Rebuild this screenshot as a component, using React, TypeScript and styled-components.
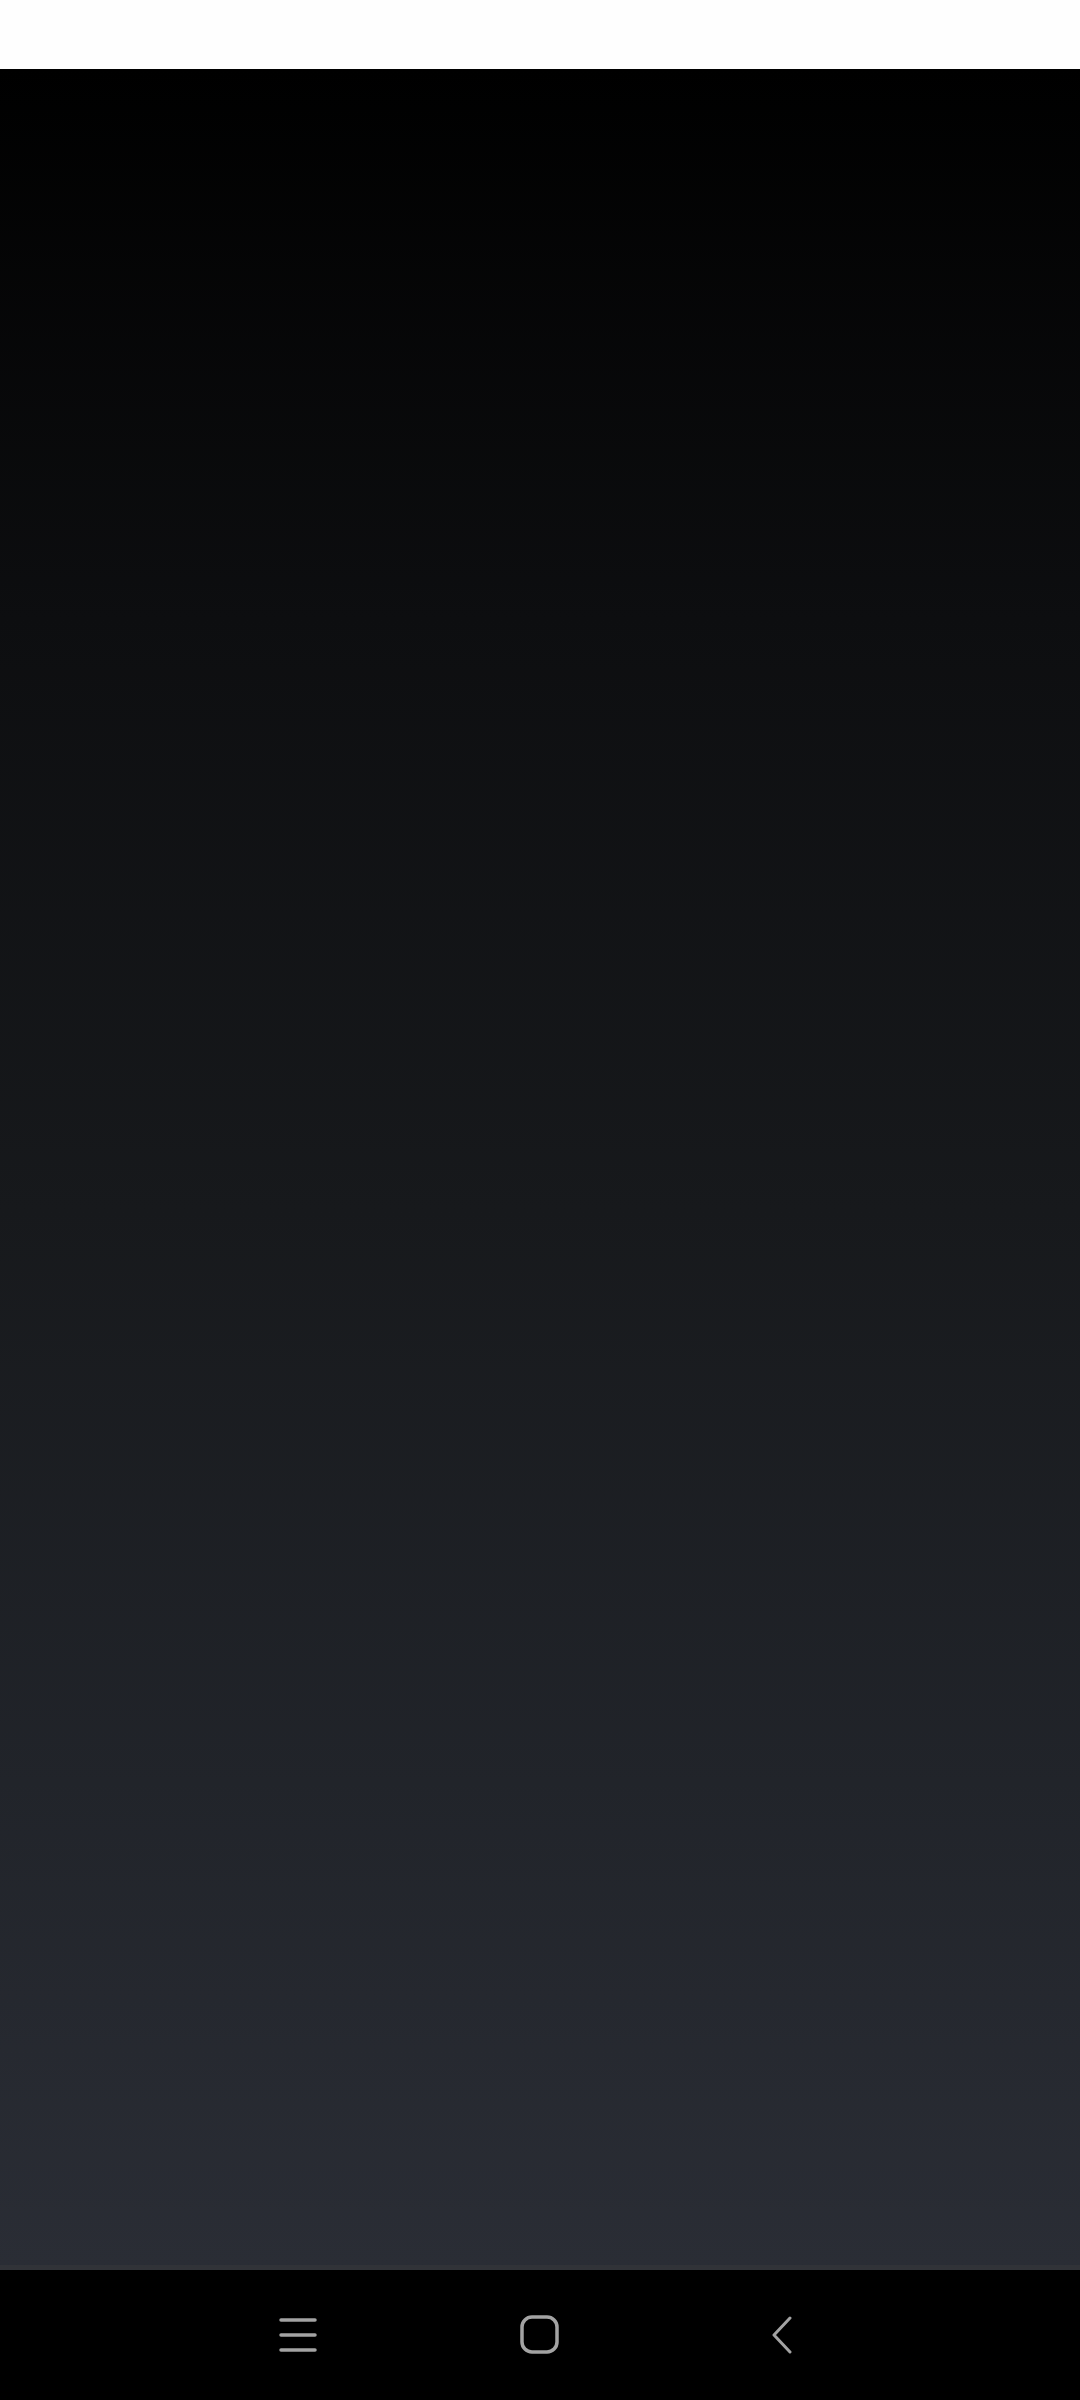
import styled, { createGlobalStyle } from "styled-components";

const Global = createGlobalStyle`
  html, body {
    margin: 0;
    padding: 0;
    background: #000;
    font-family: "Roboto", "Noto Sans", sans-serif;
  }
`;

const Screen = styled.div`
  display: flex;
  flex-direction: column;
  width: 1080px;
  height: 2400px;
`;

const StatusBar = styled.div`
  height: 69px;
  flex-shrink: 0;
  background: #fefefe;
`;

const Body = styled.main`
  flex: 1;
  background: linear-gradient(180deg, #000000 0%, #0d0e10 25%, #17191c 52%, #21242a 78%, #2a2d35 100%);
`;

const Divider = styled.div`
  height: 5px;
  flex-shrink: 0;
  background: #313338;
`;

const NavBar = styled.nav`
  height: 130px;
  flex-shrink: 0;
  background: #000;
  display: flex;
  align-items: center;
  justify-content: center;
  gap: 162px;
`;

const NavButton = styled.button`
  width: 80px;
  height: 80px;
  padding: 0;
  border: 0;
  background: transparent;
  display: flex;
  align-items: center;
  justify-content: center;
  color: #a3a3a3;
`;

const MenuIcon = () => (
  <svg width="38" height="34" viewBox="0 0 38 34" fill="none" stroke="currentColor" strokeWidth="3.5" strokeLinecap="round">
    <line x1="2" y1="2" x2="36" y2="2" />
    <line x1="2" y1="17" x2="36" y2="17" />
    <line x1="2" y1="32" x2="36" y2="32" />
  </svg>
);

const HomeIcon = () => (
  <svg width="40" height="40" viewBox="0 0 40 40" fill="none" stroke="currentColor" strokeWidth="3.5">
    <rect x="2" y="2" width="35" height="35" rx="10" />
  </svg>
);

const BackIcon = () => (
  <svg width="22" height="38" viewBox="0 0 22 38" fill="none" stroke="currentColor" strokeWidth="3" strokeLinecap="round" strokeLinejoin="round">
    <polyline points="19,2 3,19 19,36" />
  </svg>
);

export default function App() {
  return (
    <>
      <Global />
      <Screen>
        <StatusBar />
        <Body />
        <Divider />
        <NavBar>
          <NavButton aria-label="Recent apps">
            <MenuIcon />
          </NavButton>
          <NavButton aria-label="Home">
            <HomeIcon />
          </NavButton>
          <NavButton aria-label="Back">
            <BackIcon />
          </NavButton>
        </NavBar>
      </Screen>
    </>
  );
}
